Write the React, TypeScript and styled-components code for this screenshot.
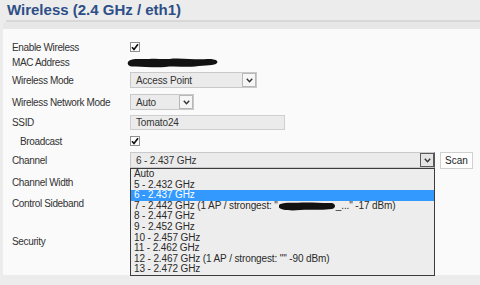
import * as React from 'react'
import styled, { createGlobalStyle } from 'styled-components'

const GlobalStyle = createGlobalStyle`
  html, body {
    margin: 0;
    padding: 0;
    background: #ececec;
  }
  body {
    font-family: "Liberation Sans", Arial, sans-serif;
    font-size: 10px;
    letter-spacing: -0.35px;
    color: #333;
  }
`

const Page = styled.div`
  width: 480px;
  height: 285px;
  overflow: hidden;
  background: #ececec;
`
const Title = styled.h1`
  margin: 0;
  padding: 2px 0 0 7px;
  height: 18px;
  font-size: 15px;
  line-height: 16px;
  font-weight: bold;
  letter-spacing: 0;
  color: #2d4e86;
`
const Rule = styled.div`
  margin-left: 6px;
  height: 2px;
  background: #d8d8d8;
`
const Band = styled.div`
  margin-left: 3px;
  height: 7px;
  background: #e7e7e7;
`
const Panel = styled.div`
  margin-left: 3px;
  padding: 10px 0 3px 9px;
  background: #fafafa;
`
const Row = styled.div<{ $h: number }>`
  display: flex;
  align-items: center;
  height: ${p => p.$h}px;
`
const Label = styled.div<{ $indent?: boolean }>`
  width: ${p => (p.$indent ? 110 : 118)}px;
  padding-left: ${p => (p.$indent ? 8 : 0)}px;
  white-space: nowrap;
`
const Box = styled.span`
  display: inline-flex;
  align-items: center;
  justify-content: center;
  width: 10px;
  height: 10px;
  box-sizing: border-box;
  border: 1px solid #8f8f8f;
  background: #fff;
`
const Select = styled.div<{ $w: number; $open?: boolean }>`
  position: relative;
  display: flex;
  align-items: center;
  justify-content: space-between;
  width: ${p => p.$w}px;
  height: 16px;
  box-sizing: border-box;
  border: 1px solid #c9c9c9;
  border-right-color: ${p => (p.$open ? '#555' : '#c9c9c9')};
  background: #ebebeb;
  padding-left: 5px;
  letter-spacing: -0.15px;
`
const Arrow = styled.span<{ $open?: boolean }>`
  display: flex;
  align-items: center;
  justify-content: center;
  width: 14px;
  height: 14px;
  box-sizing: border-box;
  border: 1px solid ${p => (p.$open ? '#5a5a5a' : '#b8b8b8')};
  background: ${p => (p.$open ? '#e4e4e4' : '#f6f6f6')};
`
const TextInput = styled.div`
  width: 155px;
  height: 15px;
  box-sizing: border-box;
  border: 1px solid #cfcfcf;
  background: #ebebeb;
  padding-left: 5px;
  line-height: 13px;
  letter-spacing: -0.15px;
`
const ScanButton = styled.div`
  margin-left: 5px;
  width: 33px;
  height: 17px;
  box-sizing: border-box;
  border: 1px solid #d0d0d0;
  background: #fff;
  color: #222;
  letter-spacing: 0;
  display: flex;
  align-items: center;
  justify-content: center;
`
const List = styled.div`
  position: absolute;
  top: 15px;
  left: -1px;
  width: 305px;
  height: 108px;
  box-sizing: border-box;
  border: 1px solid #3c3c3c;
  background: #ededed;
  z-index: 2;
`
const Option = styled.div<{ $selected?: boolean }>`
  height: 10.6px;
  line-height: 10.6px;
  padding-left: 3px;
  white-space: nowrap;
  letter-spacing: -0.12px;
  color: ${p => (p.$selected ? '#fff' : '#2a2a2a')};
  background: ${p => (p.$selected ? '#3399ff' : 'transparent')};
`
const Blob = styled.svg`
  display: inline-block;
  vertical-align: middle;
`

const Check = () => (
  <Box>
    <svg width="8" height="8" viewBox="0 0 8 8">
      <path d="M1 4.2 L3 6.5 L7 1.2" fill="none" stroke="#111" strokeWidth="1.7" />
    </svg>
  </Box>
)

const Chevron = () => (
  <svg width="7" height="5" viewBox="0 0 7 5">
    <polyline points="0.8,0.8 3.5,3.8 6.2,0.8" fill="none" stroke="#333" strokeWidth="1.4" />
  </svg>
)

const channels = [
  'Auto',
  '5 - 2.432 GHz',
  '6 - 2.437 GHz',
  '7',
  '8 - 2.447 GHz',
  '9 - 2.452 GHz',
  '10 - 2.457 GHz',
  '11 - 2.462 GHz',
  '12 - 2.467 GHz (1 AP / strongest: "" -90 dBm)',
  '13 - 2.472 GHz',
]

export default function App() {
  return (
    <Page>
      <GlobalStyle />
      <Title>Wireless (2.4 GHz / eth1)</Title>
      <Rule />
      <Band />
      <Panel>
        <Row $h={16}>
          <Label>Enable Wireless</Label>
          <Check />
        </Row>
        <Row $h={14}>
          <Label>MAC Address</Label>
          <Blob width="92" height="11" viewBox="0 0 92 11" style={{ marginLeft: -3 }}>
            <path
              d="M1 5 C3 1 12 2 22 2 C30 1 38 3 46 1.5 C58 1 70 3 80 2 C88 1.5 92 4 90 6 C88 9 78 8 68 9.5 C58 10.5 48 8.5 38 10 C26 11 14 9 6 9.5 C2 9.5 0 7.5 1 5 Z"
              fill="#121212"
            />
          </Blob>
        </Row>
        <Row $h={22}>
          <Label>Wireless Mode</Label>
          <Select $w={127}>
            Access Point
            <Arrow>
              <Chevron />
            </Arrow>
          </Select>
        </Row>
        <Row $h={22}>
          <Label>Wireless Network Mode</Label>
          <Select $w={64}>
            Auto
            <Arrow>
              <Chevron />
            </Arrow>
          </Select>
        </Row>
        <Row $h={18}>
          <Label>SSID</Label>
          <TextInput>Tomato24</TextInput>
        </Row>
        <Row $h={20}>
          <Label $indent>Broadcast</Label>
          <Check />
        </Row>
        <Row $h={18}>
          <Label>Channel</Label>
          <Select $w={305} $open>
            6 - 2.437 GHz
            <Arrow $open>
              <Chevron />
            </Arrow>
            <List>
              {channels.map((c, i) =>
                c === '7' ? (
                  <Option key={i}>
                    7 - 2.442 GHz (1 AP / strongest: "
                    <Blob width="58" height="10" viewBox="0 0 58 10">
                      <path
                        d="M1 4 C4 1 14 2 24 1.5 C34 1 46 2.5 54 2 C58 3 58 7 54 8 C44 9.5 32 8 22 9 C12 10 3 9 1 6.5 Z"
                        fill="#121212"
                      />
                    </Blob>
                    _..." -17 dBm)
                  </Option>
                ) : (
                  <Option key={i} $selected={i === 2}>
                    {c}
                  </Option>
                )
              )}
            </List>
          </Select>
          <ScanButton>Scan</ScanButton>
        </Row>
        <Row $h={27}>
          <Label>Channel Width</Label>
        </Row>
        <Row $h={14}>
          <Label>Control Sideband</Label>
        </Row>
        <Row $h={62}>
          <Label>Security</Label>
        </Row>
      </Panel>
    </Page>
  )
}
